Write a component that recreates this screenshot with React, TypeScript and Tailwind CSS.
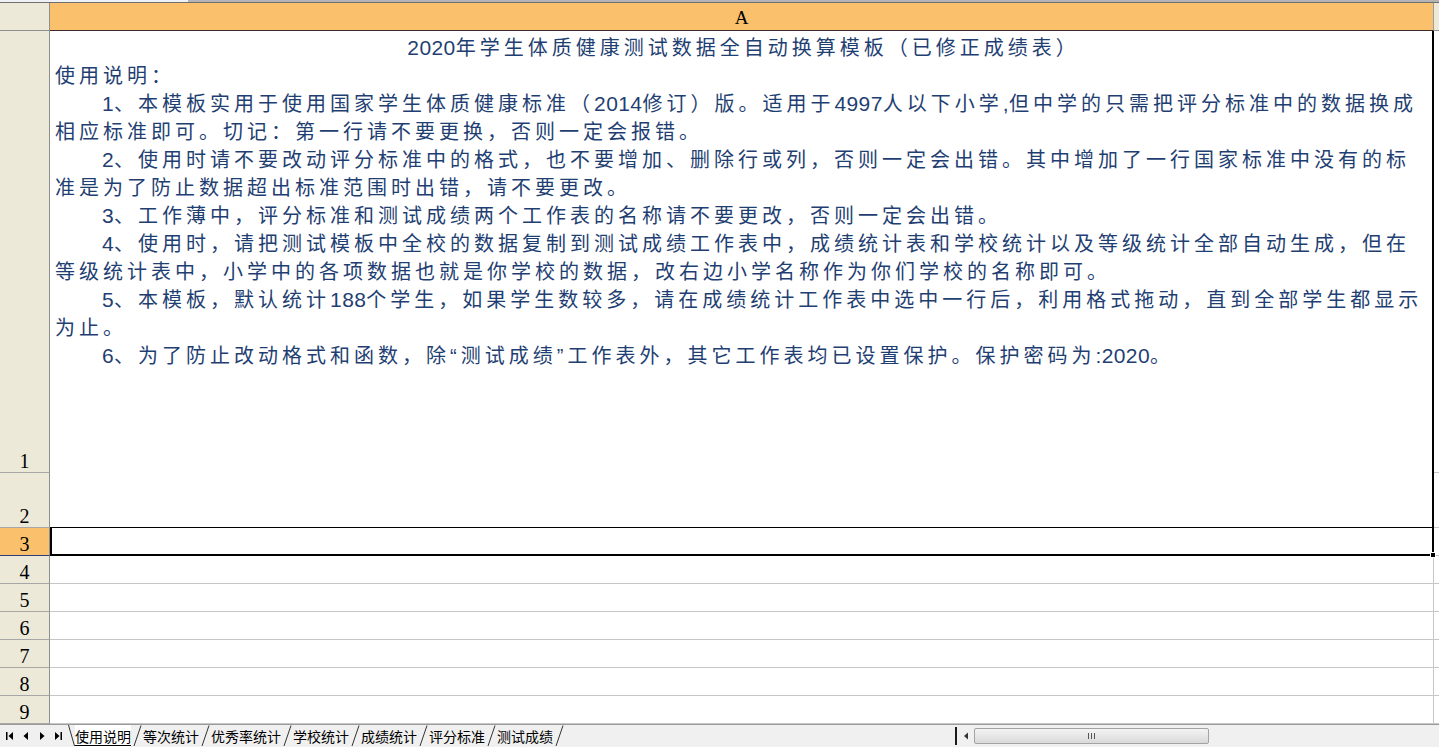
import React from "react"

const lines: { text: string; indent?: boolean; center?: boolean }[] = [
  { text: "2020年学生体质健康测试数据全自动换算模板（已修正成绩表）", center: true },
  { text: "使用说明：" },
  { text: "1、本模板实用于使用国家学生体质健康标准（2014修订）版。适用于4997人以下小学,但中学的只需把评分标准中的数据换成", indent: true },
  { text: "相应标准即可。切记：第一行请不要更换，否则一定会报错。" },
  { text: "2、使用时请不要改动评分标准中的格式，也不要增加、删除行或列，否则一定会出错。其中增加了一行国家标准中没有的标", indent: true },
  { text: "准是为了防止数据超出标准范围时出错，请不要更改。" },
  { text: "3、工作薄中，评分标准和测试成绩两个工作表的名称请不要更改，否则一定会出错。", indent: true },
  { text: "4、使用时，请把测试模板中全校的数据复制到测试成绩工作表中，成绩统计表和学校统计以及等级统计全部自动生成，但在", indent: true },
  { text: "等级统计表中，小学中的各项数据也就是你学校的数据，改右边小学名称作为你们学校的名称即可。" },
  { text: "5、本模板，默认统计188个学生，如果学生数较多，请在成绩统计工作表中选中一行后，利用格式拖动，直到全部学生都显示", indent: true },
  { text: "为止。" },
  { text: "6、为了防止改动格式和函数，除“测试成绩”工作表外，其它工作表均已设置保护。保护密码为:2020。", indent: true },
]

const tabs = ["使用说明", "等次统计", "优秀率统计", "学校统计", "成绩统计", "评分标准", "测试成绩"]

// latin runs stay tight, CJK runs get the wide SimSun-like advance
function Runs({ text }: { text: string }) {
  const parts = text.match(/[\x20-\x7e]+|[^\x20-\x7e]+/g) ?? []
  return (
    <>
      {parts.map((p, i) =>
        /[\x20-\x7e]/.test(p[0]) ? (
          <span key={i} className="text-[21px] tracking-[0.4px]">
            {p}
          </span>
        ) : (
          <span key={i} className="tracking-[4px]">
            {p}
          </span>
        )
      )}
    </>
  )
}

function RowHead({ n, active }: { n: number; active?: boolean }) {
  return (
    <div
      className={`flex items-end justify-center border-r border-b border-r-[#8e8e8e] text-[20px] leading-[22px] text-black ${
        active ? "bg-[#fbc06b] border-b-[#2b3f7a]" : "bg-[#ece9d8] border-b-[#a7a7a7]"
      }`}
    >
      {n}
    </div>
  )
}

function NavIcon({ kind }: { kind: "first" | "prev" | "next" | "last" }) {
  return (
    <svg width="16" height="12" viewBox="0 0 16 12" className="shrink-0">
      {kind === "first" && (
        <>
          <rect x="4" y="2" width="1.5" height="8" fill="#000" />
          <path d="M11 2 L6.5 6 L11 10 Z" fill="#000" />
        </>
      )}
      {kind === "prev" && <path d="M10 2 L5.5 6 L10 10 Z" fill="#000" />}
      {kind === "next" && <path d="M6 2 L10.5 6 L6 10 Z" fill="#000" />}
      {kind === "last" && (
        <>
          <path d="M5 2 L9.5 6 L5 10 Z" fill="#000" />
          <rect x="10.5" y="2" width="1.5" height="8" fill="#000" />
        </>
      )}
    </svg>
  )
}

export default function App() {
  return (
    <div className="flex h-[747px] w-full flex-col overflow-hidden bg-white font-['Liberation_Serif',serif]">
      {/* top strip */}
      <div className="flex h-[3px] shrink-0 border-b border-[#6f6f6f]">
        <div className="w-[188px] bg-[#eef1f5]" />
        <div className="flex-1 bg-[#b4b4b4]" />
      </div>

      <div className="grid shrink-0 grid-cols-[50px_1384px_1fr] grid-rows-[28px_442px_55px_28px_repeat(6,28px)]">
        {/* header row */}
        <div className="border-r border-b border-r-[#8e8e8e] border-b-[#8e8e8e] bg-[#ece9d8]" />
        <div className="flex items-center justify-center border-r border-b border-r-[#9c9c9c] border-b-[#3a2a2a] bg-[#fbc06b] pt-[4px] text-[19px] text-black">
          A
        </div>
        <div className="border-b border-b-[#8e8e8e] bg-[#ece9d8]" />

        {/* rows 1-2, merged A1:A2 */}
        <RowHead n={1} />
        <div className="row-span-2 border-r-2 border-b border-r-black border-b-black pt-[3px] pl-[5px] font-['Liberation_Sans','Noto_Sans_CJK_SC',sans-serif] text-[20px] text-[#1f3f73]">
          {lines.map((l, i) => (
            <div
              key={i}
              className={`h-[28px] whitespace-nowrap leading-[28px] ${l.center ? "text-center" : ""} ${
                l.indent ? "pl-[47px]" : ""
              }`}
            >
              <Runs text={l.text} />
            </div>
          ))}
        </div>
        <div className="border-b border-[#c6c6c6]" />
        <RowHead n={2} />
        <div className="border-b border-[#c6c6c6]" />

        {/* row 3, selected */}
        <RowHead n={3} active />
        <div className="relative border-x-2 border-b-2 border-black">
          <div className="absolute -right-[4px] -bottom-[4px] h-[6px] w-[6px] border border-white bg-black" />
        </div>
        <div className="border-b border-[#c6c6c6]" />

        {[4, 5, 6, 7, 8, 9].map((n) => (
          <React.Fragment key={n}>
            <RowHead n={n} />
            <div className="border-r border-b border-[#c6c6c6]" />
            <div className="border-b border-[#c6c6c6]" />
          </React.Fragment>
        ))}
      </div>

      {/* sheet tabs + horizontal scrollbar */}
      <div className="flex h-[23px] shrink-0 items-stretch border-t border-[#9a9a9a] bg-[#f0f0f0] font-['Noto_Sans_CJK_SC',sans-serif] text-[14px] text-black">
        <div className="flex w-[68px] items-center pl-[2px]">
          <NavIcon kind="first" />
          <NavIcon kind="prev" />
          <NavIcon kind="next" />
          <NavIcon kind="last" />
        </div>
        <svg width="7" height="22" viewBox="0 0 7 22" className="shrink-0">
          <path d="M0.5 0 L6.5 21" stroke="#333" strokeWidth="1" fill="none" />
        </svg>
        {tabs.map((t, i) => (
          <React.Fragment key={t}>
            <div
              className={`flex items-center leading-[20px] ${i === 0 ? "bg-white underline underline-offset-[3px]" : ""}`}
            >
              {t}
            </div>
            <svg width="12" height="22" viewBox="0 0 12 22" className="shrink-0">
              <path d="M3 21 L10 0.5" stroke="#333" strokeWidth="1" fill="none" />
            </svg>
          </React.Fragment>
        ))}
        <div className="flex-1" />
        <div className="my-[2px] w-[2px] bg-[#1a1a1a]" />
        <div className="flex w-[17px] items-center justify-center">
          <svg width="6" height="8" viewBox="0 0 6 8">
            <path d="M5 0.5 L1 4 L5 7.5 Z" fill="#333" />
          </svg>
        </div>
        <div className="my-[3px] flex w-[235px] items-center justify-center rounded-[2px] border border-[#a3a3a3] bg-gradient-to-b from-[#f4f4f4] to-[#d9d9d9]">
          <div className="flex gap-[2px]">
            <div className="h-[6px] w-[1px] bg-[#555]" />
            <div className="h-[6px] w-[1px] bg-[#555]" />
            <div className="h-[6px] w-[1px] bg-[#555]" />
          </div>
        </div>
        <div className="w-[230px]" />
      </div>
    </div>
  )
}
